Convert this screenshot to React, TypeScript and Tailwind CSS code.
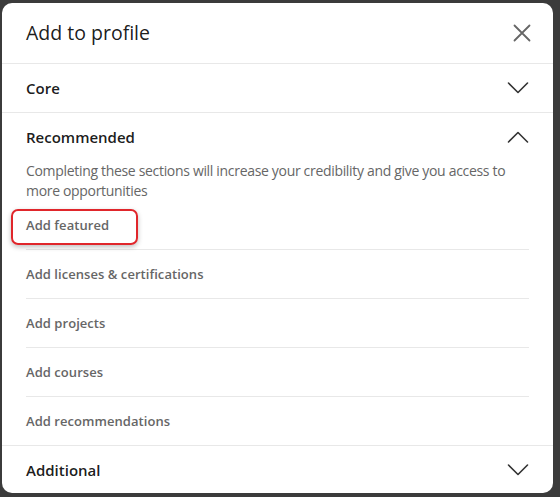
import React from 'react';

const items = [
  'Add featured',
  'Add licenses & certifications',
  'Add projects',
  'Add courses',
  'Add recommendations',
];

function Chevron({ up = false }: { up?: boolean }) {
  return (
    <svg width="22" height="12" viewBox="0 0 22 12" fill="none" className="text-[#333]">
      <path
        d={up ? 'M1.5 11L11 1.5L20.5 11' : 'M1.5 1L11 10.5L20.5 1'}
        stroke="currentColor"
        strokeWidth="1.6"
        strokeLinecap="round"
        strokeLinejoin="round"
      />
    </svg>
  );
}

function CloseIcon() {
  return (
    <svg width="18" height="18" viewBox="0 0 18 18" fill="none" className="text-[#666]">
      <path d="M1.5 1.5L16.5 16.5M16.5 1.5L1.5 16.5" stroke="currentColor" strokeWidth="1.8" strokeLinecap="round" />
    </svg>
  );
}

export default function App() {
  return (
    <div
      className="w-[560px] h-[497px] bg-[#3b3b3b] pt-[3px] pl-[2px] overflow-hidden"
      style={{ fontFamily: '"Open Sans", "Noto Sans", Arial, sans-serif' }}
    >
      <div className="w-[551px] h-[490px] bg-white rounded-[10px] overflow-hidden flex flex-col">
        <div className="h-[61px] shrink-0 flex items-center justify-between pl-6 pr-[22px] border-b border-[#e8e8e8]">
          <h2 className="text-[19.5px] text-[rgba(0,0,0,0.9)] font-normal">Add to profile</h2>
          <button className="p-0">
            <CloseIcon />
          </button>
        </div>

        <div className="h-[49px] shrink-0 flex items-center justify-between pl-6 pr-6 border-b border-[#e8e8e8]">
          <span className="text-[15px] font-semibold text-[rgba(0,0,0,0.9)]">Core</span>
          <Chevron />
        </div>

        <div className="shrink-0 border-b border-[#e8e8e8]">
          <div className="h-12 flex items-center justify-between pl-6 pr-6">
            <span className="text-[15px] font-semibold text-[rgba(0,0,0,0.9)]">Recommended</span>
            <Chevron up />
          </div>
          <p className="px-6 text-[14px] leading-5 text-[#666] tracking-[-0.32px]">
            Completing these sections will increase your credibility and give you access to more
            opportunities
          </p>
          <ul className="px-6">
            {items.map((label, i) => (
              <li
                key={label}
                className={`relative flex items-center ${i < items.length - 1 ? 'h-[49px] border-b border-[#e8e8e8]' : 'h-12'}`}
              >
                <span className="text-[13px] font-semibold text-[#666] tracking-[0.05px] translate-y-[1px]">{label}</span>
                {i === 0 && (
                  <div className="absolute left-[-15px] top-[8px] w-[127px] h-[36px] rounded-[7px] border-2 border-[#e0262b] shadow-[0_2px_5px_rgba(0,0,0,0.25)]" />
                )}
              </li>
            ))}
          </ul>
        </div>

        <div className="h-12 shrink-0 flex items-center justify-between pl-6 pr-6">
          <span className="text-[15px] font-semibold text-[rgba(0,0,0,0.9)]">Additional</span>
          <Chevron />
        </div>
      </div>
    </div>
  );
}
